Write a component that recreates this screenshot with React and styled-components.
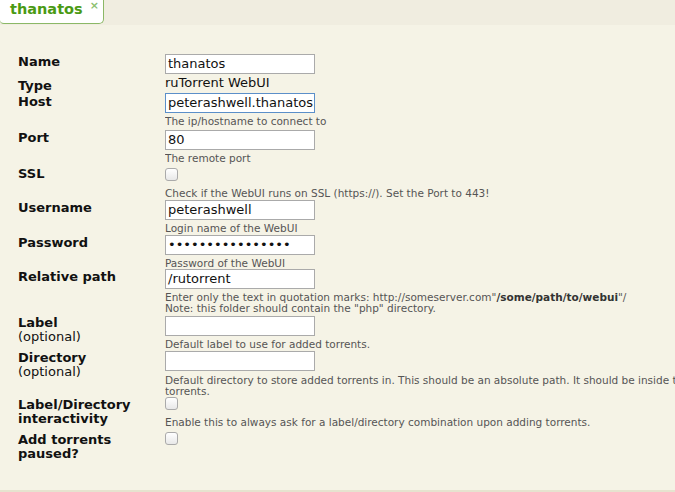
import React from "react";
import styled, { createGlobalStyle } from "styled-components";

const G = createGlobalStyle`
  html,body{margin:0;padding:0;background:#f5f3e6;}
  body{font-family:"DejaVu Sans",sans-serif;width:675px;height:492px;overflow:hidden;}
`;
const Page = styled.div`height:492px;display:flex;flex-direction:column;`;
const TabBar = styled.div`height:25px;background:#f0ede0;display:flex;`;
const Tab = styled.div`
  width:104px;height:24px;background:#fff;border:1px solid #8bb866;border-top:none;border-left:none;
  border-bottom-right-radius:5px;border-bottom-left-radius:4px;position:relative;
  font-weight:bold;font-size:14.5px;color:#4a9a14;padding-left:10px;box-sizing:border-box;line-height:19px;
`;
const Close = styled.span`position:absolute;right:4px;top:-4px;font-size:11px;color:#8cc070;font-weight:bold;`;
const Body = styled.div`flex:1;padding:29px 0 0 18px;border-bottom:2px solid #e6e3cf;overflow:hidden;`;
const Row = styled.div`display:flex;height:${p=>p.h}px;`;
const Label = styled.div`width:147px;flex-shrink:0;font-size:13px;line-height:14px;color:#111;padding-top:${p=>p.pt||0}px;
  b{font-weight:bold;} span{font-weight:normal;}`;
const Field = styled.div`flex:1;min-width:0;overflow:hidden;display:flex;flex-direction:column;font-size:13px;color:#111;margin-top:${p=>p.pt||0}px;`;
const Input = styled.div`width:150px;height:20px;box-sizing:border-box;border:1px solid #999;background:#fff;
  font-size:13px;line-height:18px;padding-left:2px;overflow:hidden;white-space:nowrap;
  border-color:${p=>p.focus?"#5b8fc9":"#aaa"};`;
const Hint = styled.div`font-size:10.5px;color:#555;line-height:11px;margin-top:${p=>p.mt||3}px;white-space:nowrap;b{color:#333}`;
const Check = styled.div`width:11px;height:11px;border:1px solid #aaa;border-radius:3px;background:linear-gradient(#fff,#e8e8e8);`;

export default function App(){
  return <Page><G/>
    <TabBar><Tab>thanatos<Close>×</Close></Tab></TabBar>
    <Body>
      <Row h={24}><Label pt={1}><b>Name</b></Label><Field><Input>thanatos</Input></Field></Row>
      <Row h={15}><Label pt={1}><b>Type</b></Label><Field pt={-3}>ruTorrent WebUI</Field></Row>
      <Row h={37}><Label pt={2}><b>Host</b></Label><Field><Input focus>peterashwell.thanatos.net</Input><Hint>The ip/hostname to connect to</Hint></Field></Row>
      <Row h={37}><Label pt={1}><b>Port</b></Label><Field><Input>80</Input><Hint>The remote port</Hint></Field></Row>
      <Row h={33}><Label pt={0}><b>SSL</b></Label><Field pt={1}><Check/><Hint mt={7}>Check if the WebUI runs on SSL (https://). Set the Port to 443!</Hint></Field></Row>
      <Row h={35}><Label pt={1}><b>Username</b></Label><Field><Input>peterashwell</Input><Hint>Login name of the WebUI</Hint></Field></Row>
      <Row h={34}><Label pt={1}><b>Password</b></Label><Field><Input>••••••••••••••••</Input><Hint>Password of the WebUI</Hint></Field></Row>
      <Row h={47}><Label pt={1}><b>Relative path</b></Label><Field><Input>/rutorrent</Input><Hint>Enter only the text in quotation marks: http://someserver.com"<b>/some/path/to/webui</b>"/<br/>Note: this folder should contain the "php" directory.</Hint></Field></Row>
      <Row h={35}><Label><b>Label</b><br/><span>(optional)</span></Label><Field><Input/><Hint>Default label to use for added torrents.</Hint></Field></Row>
      <Row h={46}><Label><b>Directory</b><br/><span>(optional)</span></Label><Field><Input/><Hint mt={4}>Default directory to store added torrents in. This should be an absolute path. It should be inside the download directory of added<br/>torrents.</Hint></Field></Row>
      <Row h={35}><Label pt={1}><b>Label/Directory<br/>interactivity</b></Label><Field pt={0}><Check/><Hint mt={7}>Enable this to always ask for a label/directory combination upon adding torrents.</Hint></Field></Row>
      <Row h={30}><Label pt={1}><b>Add torrents<br/>paused?</b></Label><Field pt={0}><Check/></Field></Row>
    </Body>
  </Page>;
}
